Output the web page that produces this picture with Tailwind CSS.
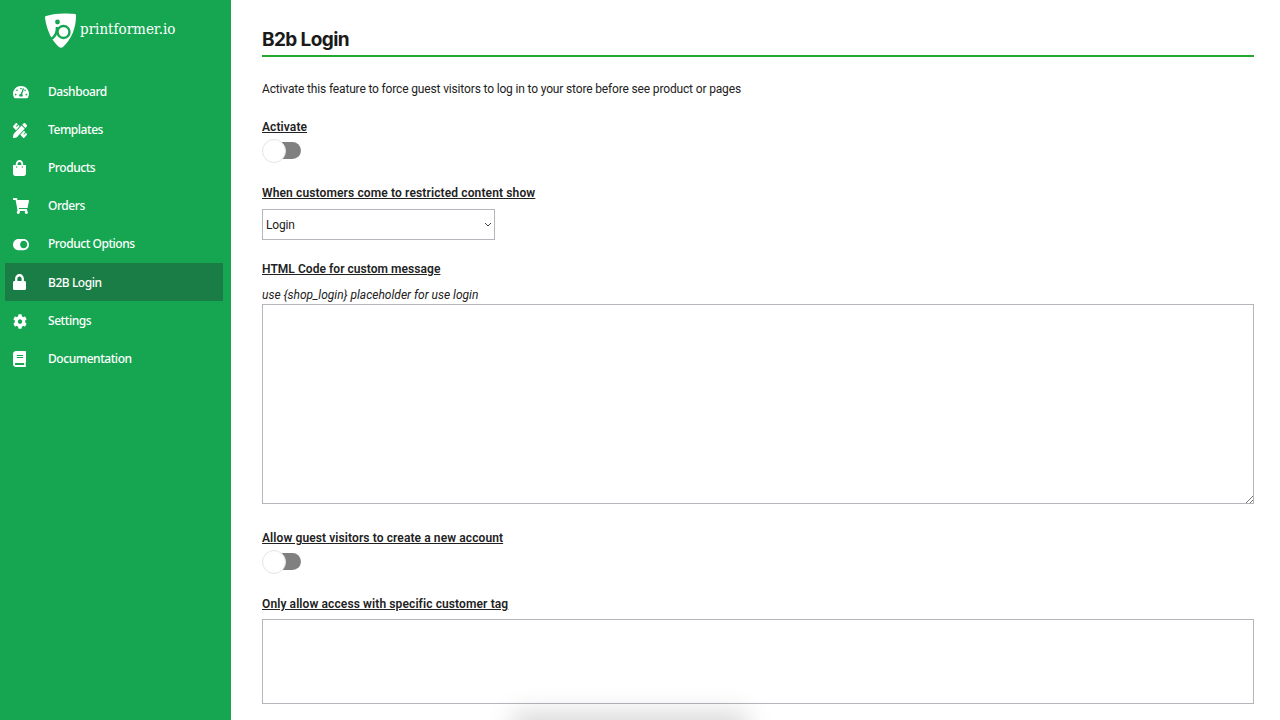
<!DOCTYPE html>
<html lang="en">
<head>
    <meta charset="UTF-8">
    <title>B2b Login</title>
    <script src="https://cdn.jsdelivr.net/npm/@tailwindcss/browser@4"></script>
</head>
<body class="bg-white h-[720px] w-[1280px] overflow-hidden flex font-['Roboto',sans-serif] text-[#222]">
    <!-- Sidebar -->
    <aside class="w-[231px] h-[720px] shrink-0 bg-[#16a652] text-white font-['Noto_Sans',sans-serif]">
        <div class="h-[73px] flex items-start pt-[13px] pl-[45px] gap-[4px]">
            <svg class="w-[31px] h-[35px]" viewBox="0 0 31 35">
                <path fill="#fff" d="M1 3C9 0 22 0 30 1c1 0 1 1 1 2 0 11-4 23-13 31-1 1-3 1-4 0C7 28 2 18 0 5c0-1 0-2 1-2z"/>
                <circle cx="12.5" cy="9" r="2.4" fill="#16a652"/>
                <path fill="none" stroke="#16a652" stroke-width="2.4" d="M5 26c4-1 7-5 7-12"/>
                <circle cx="18.5" cy="19" r="6" fill="none" stroke="#16a652" stroke-width="2.4"/>
            </svg>
            <span class="mt-[4px] text-[15px] leading-[24px] font-['DejaVu_Serif_Condensed','DejaVu_Serif',serif]">printformer.io</span>
        </div>
        <nav class="pl-[5px] w-[223px] text-[12px] tracking-[-0.45px] font-medium">
            <a class="h-[38px] flex items-center pl-[8px]"><span class="w-[35px]"><svg class="w-[16px] h-[14px]" preserveAspectRatio="none" fill="#fff" viewBox="0 0 576 512"><path d="M288 32C128.94 32 0 160.94 0 320c0 52.8 14.25 102.26 39.06 144.8 5.61 9.62 16.3 15.2 27.44 15.2h443c11.14 0 21.83-5.58 27.44-15.2C561.75 422.26 576 372.8 576 320c0-159.06-128.94-288-288-288zm0 64c14.71 0 26.58 10.13 30.32 23.65-1.11 2.26-2.64 4.23-3.45 6.67l-9.22 27.67c-5.13 3.49-10.97 6.01-17.64 6.01-17.67 0-32-14.33-32-32S270.33 96 288 96zM96 384c-17.67 0-32-14.33-32-32s14.33-32 32-32 32 14.33 32 32-14.33 32-32 32zm48-160c-17.67 0-32-14.33-32-32s14.33-32 32-32 32 14.33 32 32-14.33 32-32 32zm246.77-72.41l-61.33 184C343.13 347.33 352 364.54 352 384c0 11.72-3.38 22.55-8.88 32H232.88c-5.5-9.45-8.88-20.28-8.88-32 0-33.94 26.5-61.43 59.9-63.59l61.34-184.01c4.17-12.56 17.73-19.45 30.36-15.17 12.57 4.19 19.35 17.77 15.17 30.36zm14.66 57.2l15.52-46.55c3.47-1.29 7.13-2.23 11.05-2.23 17.67 0 32 14.33 32 32s-14.33 32-32 32c-11.38-.01-20.89-6.28-26.57-15.22zM480 384c-17.67 0-32-14.33-32-32s14.33-32 32-32 32 14.33 32 32-14.33 32-32 32z"/></svg></span>Dashboard</a>
            <a class="h-[38px] flex items-center pl-[8px]"><span class="w-[35px]"><svg class="w-[14px] h-[15px]" preserveAspectRatio="none" fill="#fff" viewBox="0 0 512 512"><path d="M109.46 244.04l134.58-134.56-44.12-44.12-61.68 61.68a7.919 7.919 0 0 1-11.21 0l-11.21-11.21c-3.1-3.1-3.1-8.12 0-11.21l61.68-61.68-33.64-33.65C131.47-3.1 111.39-3.1 99 9.29L9.29 99c-12.38 12.39-12.39 32.47 0 44.86l100.17 100.18zm388.47-116.8c18.76-18.76 18.75-49.17 0-67.93l-45.25-45.25c-18.76-18.76-49.18-18.76-67.95 0l-46.02 46.01 113.2 113.2 46.02-46.03zM316.08 82.71l-297 296.96L.32 487.11c-2.53 14.49 10.09 27.11 24.59 24.56l107.45-18.84L429.28 195.9 316.08 82.71zm186.63 285.43l-33.64-33.64-61.68 61.68c-3.1 3.1-8.12 3.1-11.21 0l-11.21-11.21c-3.09-3.1-3.09-8.12 0-11.21l61.68-61.68-44.14-44.14L267.93 402.5l100.21 100.2c12.39 12.39 32.47 12.39 44.86 0l89.71-89.7c12.39-12.39 12.39-32.47 0-44.86z"/></svg></span>Templates</a>
            <a class="h-[38px] flex items-center pl-[8px]"><span class="w-[35px]"><svg class="w-[13px] h-[16px]" preserveAspectRatio="none" fill="#fff" viewBox="0 0 448 512"><path d="M352 160v-32C352 57.42 294.579 0 224 0 153.42 0 96 57.42 96 128v32H0v272c0 44.183 35.817 80 80 80h288c44.183 0 80-35.817 80-80V160h-96zm-192-32c0-35.29 28.71-64 64-64s64 28.71 64 64v32H160v-32zm160 120c-13.255 0-24-10.745-24-24s10.745-24 24-24 24 10.745 24 24-10.745 24-24 24zm-192 0c-13.255 0-24-10.745-24-24s10.745-24 24-24 24 10.745 24 24-10.745 24-24 24z"/></svg></span>Products</a>
            <a class="h-[38px] flex items-center pl-[8px]"><span class="w-[35px]"><svg class="w-[16px] h-[16px]" preserveAspectRatio="none" fill="#fff" viewBox="0 0 576 512"><path d="M528.12 301.319l47.273-208C578.806 78.301 567.391 64 551.99 64H159.208l-9.166-44.81C147.758 8.021 137.93 0 126.529 0H24C10.745 0 0 10.745 0 24v16c0 13.255 10.745 24 24 24h69.883l70.248 343.435C147.325 417.1 136 435.222 136 456c0 30.928 25.072 56 56 56s56-25.072 56-56c0-15.674-6.447-29.835-16.824-40h209.647C430.447 426.165 424 440.326 424 456c0 30.928 25.072 56 56 56s56-25.072 56-56c0-22.172-12.888-41.332-31.579-50.405l5.517-24.276c3.413-15.018-8.002-29.319-23.403-29.319H218.117l-6.545-32h293.145c11.206 0 20.92-7.754 23.403-18.681z"/></svg></span>Orders</a>
            <a class="h-[38px] flex items-center pl-[8px]"><span class="w-[35px]"><svg class="w-[16px] h-[15px]" preserveAspectRatio="none" fill="#fff" viewBox="0 0 576 512"><path d="M384 64H192C86 64 0 150 0 256s86 192 192 192h192c106 0 192-86 192-192S490 64 384 64zm0 320c-70.8 0-128-57.3-128-128 0-70.8 57.3-128 128-128 70.8 0 128 57.3 128 128 0 70.8-57.3 128-128 128z"/></svg></span>Product Options</a>
            <a class="h-[38px] flex items-center pl-[8px] bg-[#1a7d45]"><span class="w-[35px]"><svg class="w-[13px] h-[16px]" preserveAspectRatio="none" fill="#fff" viewBox="0 0 448 512"><path d="M400 224h-24v-72C376 68.2 307.8 0 224 0S72 68.2 72 152v72H48c-26.5 0-48 21.5-48 48v192c0 26.5 21.5 48 48 48h352c26.5 0 48-21.5 48-48V272c0-26.5-21.5-48-48-48zm-104 0H152v-72c0-39.7 32.3-72 72-72s72 32.3 72 72v72z"/></svg></span><span class="mt-[2px]">B2B Login</span></a>
            <a class="h-[38px] flex items-center pl-[8px] pt-[2px]"><span class="w-[35px]"><svg class="w-[14px] h-[15px]" preserveAspectRatio="none" fill="#fff" viewBox="0 0 512 512"><path d="M487.4 315.7l-42.6-24.6c4.3-23.2 4.3-47 0-70.2l42.6-24.6c4.9-2.8 7.1-8.6 5.5-14-11.1-35.6-30-67.8-54.7-94.6-3.8-4.1-10-5.1-14.8-2.3L380.8 110c-17.9-15.4-38.5-27.3-60.8-35.1V25.8c0-5.6-3.9-10.5-9.4-11.7-36.7-8.2-74.3-7.8-109.2 0-5.5 1.2-9.4 6.1-9.4 11.7V75c-22.2 7.9-42.8 19.8-60.8 35.1L88.7 85.5c-4.9-2.8-11-1.9-14.8 2.3-24.7 26.7-43.6 58.9-54.7 94.6-1.7 5.4.6 11.2 5.5 14L67.3 221c-4.3 23.2-4.3 47 0 70.2l-42.6 24.6c-4.9 2.8-7.1 8.6-5.5 14 11.1 35.6 30 67.8 54.7 94.6 3.8 4.1 10 5.1 14.8 2.3l42.6-24.6c17.9 15.4 38.5 27.3 60.8 35.1v49.2c0 5.6 3.9 10.5 9.4 11.7 36.7 8.2 74.3 7.8 109.2 0 5.5-1.2 9.4-6.1 9.4-11.7v-49.2c22.2-7.9 42.8-19.8 60.8-35.1l42.6 24.6c4.9 2.8 11 1.9 14.8-2.3 24.7-26.7 43.6-58.9 54.7-94.6 1.5-5.5-.7-11.3-5.6-14.1zM256 336c-44.1 0-80-35.9-80-80s35.9-80 80-80 80 35.9 80 80-35.9 80-80 80z"/></svg></span>Settings</a>
            <a class="h-[38px] flex items-center pl-[8px] pt-[2px]"><span class="w-[35px]"><svg class="w-[13px] h-[16px]" preserveAspectRatio="none" fill="#fff" viewBox="0 0 448 512"><path d="M448 360V24c0-13.3-10.7-24-24-24H96C43 0 0 43 0 96v320c0 53 43 96 96 96h328c13.3 0 24-10.7 24-24v-16c0-7.5-3.5-14.3-8.9-18.7-4.2-15.4-4.2-59.3 0-74.7 5.4-4.3 8.9-11.1 8.9-18.6zM128 134c0-3.3 2.7-6 6-6h212c3.3 0 6 2.7 6 6v20c0 3.3-2.7 6-6 6H134c-3.3 0-6-2.7-6-6v-20zm0 64c0-3.3 2.7-6 6-6h212c3.3 0 6 2.7 6 6v20c0 3.3-2.7 6-6 6H134c-3.3 0-6-2.7-6-6v-20zm253.4 250H96c-17.7 0-32-14.3-32-32 0-17.6 14.4-32 32-32h285.4c-1.9 17.1-1.9 46.9 0 64z"/></svg></span>Documentation</a>
        </nav>
    </aside>

    <!-- Main -->
    <main class="flex-1 pl-[31px] pr-[26px] text-[12px] leading-[16px]">
        <h1 class="pt-[28px] h-[57px] border-b-2 border-[#22a82e] font-['Inter',sans-serif] text-[19px] leading-[24px] font-bold tracking-[-0.6px] text-[#1a1a1a]">B2b Login</h1>
        <p class="mt-[24px] tracking-[-0.155px]">Activate this feature to force guest visitors to log in to your store before see product or pages</p>
        <label class="block mt-[22px] font-semibold underline tracking-[0.1px]">Activate</label>
        <div class="relative mt-[4px] w-[40px] h-[24px]">
            <div class="absolute left-[20px] top-[3px] w-[19px] h-[17px] bg-[#808080] rounded-r-full"></div>
            <div class="absolute left-0 top-0 w-[24px] h-[24px] bg-white border border-[#e4e4e4] rounded-full"></div>
        </div>
        <label class="block mt-[22px] font-semibold underline tracking-[0.13px]">When customers come to restricted content show</label>
        <div class="relative mt-[8px] w-[233px] h-[31px] border border-[#b5b5bb] flex items-center pl-[3px] tracking-[-0.2px]">
            Login
            <svg class="absolute right-[2px] top-[12px] w-[8px] h-[6px]" viewBox="0 0 8 6"><path d="M1 1l3 3 3-3" fill="none" stroke="#444" stroke-width="1"/></svg>
        </div>
        <label class="block mt-[21px] font-semibold underline tracking-[0.05px]">HTML Code for custom message</label>
        <p class="mt-[10px] italic">use {shop_login} placeholder for use login</p>
        <div class="relative mt-[1px] h-[200px] border border-[#b5b5bb]">
            <svg class="absolute right-0 bottom-0 w-[7px] h-[7px]" viewBox="0 0 7 7"><path d="M0 7l7-7M4 7l3-3" stroke="#777" stroke-width="1"/></svg>
        </div>
        <label class="block mt-[26px] font-semibold underline tracking-[0.1px]">Allow guest visitors to create a new account</label>
        <div class="relative mt-[4px] w-[40px] h-[24px]">
            <div class="absolute left-[20px] top-[3px] w-[19px] h-[17px] bg-[#808080] rounded-r-full"></div>
            <div class="absolute left-0 top-0 w-[24px] h-[24px] bg-white border border-[#e4e4e4] rounded-full"></div>
        </div>
        <label class="block mt-[22px] font-semibold underline tracking-[0.11px]">Only allow access with specific customer tag</label>
        <div class="mt-[7px] h-[85px] border border-[#b5b5bb]"></div>
    </main>

    <!-- shadow bleeding in from the bottom edge -->
    <div class="absolute left-[510px] top-[712px] w-[240px] h-[30px] bg-black/15 blur-[12px] rounded-full"></div>
</body>
</html>
